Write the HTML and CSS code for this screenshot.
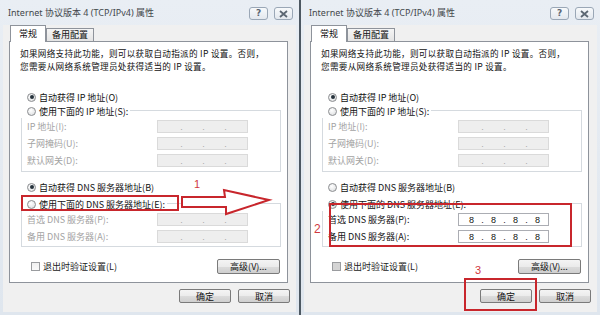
FILE: index.html
```html
<!DOCTYPE html>
<html lang="zh-CN">
<head>
<meta charset="utf-8">
<title>Internet 协议版本 4 (TCP/IPv4) 属性</title>
<link rel="stylesheet" href="styles.css">
</head>
<body>
<div class="screen">
  <section class="dlg">
    <header class="titlebar">
      <span class="title">Internet 协议版本 4 (TCP/IPv4) 属性</span>
      <div class="tbtns">
        <span class="tbtn help">?</span>
        <span class="tbtn close"><svg width="11" height="8" viewBox="0 0 11 8"><path d="M2 1 L9 7 M9 1 L2 7" stroke="#5b6672" stroke-width="1.8" fill="none"/></svg></span>
      </div>
    </header>
    <div class="client">
      <div class="tabs"><span class="tab active">常规</span><span class="tab">备用配置</span></div>
      <div class="panel">
        <div class="desc"><span>如果网络支持此功能，则可以获取自动指派的 IP 设置。否则，</span><span>您需要从网络系统管理员处获得适当的 IP 设置。</span></div>
        <div class="opt first"><span class="radio on"></span>自动获得 IP 地址(O)</div>
        <div class="group">
          <div class="opt legend"><span class="radio"></span>使用下面的 IP 地址(S):</div>
          <div class="row dis"><span class="lbl">IP 地址(I):</span><span class="ipbox off"><i></i><b>.</b><i></i><b>.</b><i></i><b>.</b><i></i></span></div>
          <div class="row dis"><span class="lbl">子网掩码(U):</span><span class="ipbox off"><i></i><b>.</b><i></i><b>.</b><i></i><b>.</b><i></i></span></div>
          <div class="row dis"><span class="lbl">默认网关(D):</span><span class="ipbox off"><i></i><b>.</b><i></i><b>.</b><i></i><b>.</b><i></i></span></div>
        </div>
        <div class="opt mid"><span class="radio on"></span>自动获得 DNS 服务器地址(B)</div>
        <div class="group g2">
          <div class="opt legend"><span class="radio"></span>使用下面的 DNS 服务器地址(E):</div>
          <div class="row dis"><span class="lbl">首选 DNS 服务器(P):</span><span class="ipbox off"><i></i><b>.</b><i></i><b>.</b><i></i><b>.</b><i></i></span></div>
          <div class="row dis"><span class="lbl">备用 DNS 服务器(A):</span><span class="ipbox off"><i></i><b>.</b><i></i><b>.</b><i></i><b>.</b><i></i></span></div>
        </div>
        <div class="foot">
          <div class="chk"><span class="box"></span>退出时验证设置(L)</div>
          <span class="btn adv">高级(V)...</span>
        </div>
      </div>
      <div class="actions"><span class="btn">确定</span><span class="btn">取消</span></div>
    </div>
  </section>
  <div class="divider"></div>
  <section class="dlg">
    <header class="titlebar">
      <span class="title">Internet 协议版本 4 (TCP/IPv4) 属性</span>
      <div class="tbtns">
        <span class="tbtn help">?</span>
        <span class="tbtn close"><svg width="11" height="8" viewBox="0 0 11 8"><path d="M2 1 L9 7 M9 1 L2 7" stroke="#5b6672" stroke-width="1.8" fill="none"/></svg></span>
      </div>
    </header>
    <div class="client">
      <div class="tabs"><span class="tab active">常规</span><span class="tab">备用配置</span></div>
      <div class="panel">
        <div class="desc"><span>如果网络支持此功能，则可以获取自动指派的 IP 设置。否则，</span><span>您需要从网络系统管理员处获得适当的 IP 设置。</span></div>
        <div class="opt first"><span class="radio on"></span>自动获得 IP 地址(O)</div>
        <div class="group">
          <div class="opt legend"><span class="radio"></span>使用下面的 IP 地址(S):</div>
          <div class="row dis"><span class="lbl">IP 地址(I):</span><span class="ipbox off"><i></i><b>.</b><i></i><b>.</b><i></i><b>.</b><i></i></span></div>
          <div class="row dis"><span class="lbl">子网掩码(U):</span><span class="ipbox off"><i></i><b>.</b><i></i><b>.</b><i></i><b>.</b><i></i></span></div>
          <div class="row dis"><span class="lbl">默认网关(D):</span><span class="ipbox off"><i></i><b>.</b><i></i><b>.</b><i></i><b>.</b><i></i></span></div>
        </div>
        <div class="opt mid"><span class="radio"></span>自动获得 DNS 服务器地址(B)</div>
        <div class="group g2">
          <div class="opt legend"><span class="radio on"></span>使用下面的 DNS 服务器地址(E):</div>
          <div class="row"><span class="lbl">首选 DNS 服务器(P):</span><span class="ipbox"><i>8</i><b>.</b><i>8</i><b>.</b><i>8</i><b>.</b><i>8</i></span></div>
          <div class="row"><span class="lbl">备用 DNS 服务器(A):</span><span class="ipbox"><i>8</i><b>.</b><i>8</i><b>.</b><i>8</i><b>.</b><i>8</i></span></div>
        </div>
        <div class="foot">
          <div class="chk"><span class="box grey"></span>退出时验证设置(L)</div>
          <span class="btn adv">高级(V)...</span>
        </div>
      </div>
      <div class="actions"><span class="btn">确定</span><span class="btn">取消</span></div>
    </div>
  </section>

  <div class="mark box1"></div>
  <span class="num n1">1</span>
  <svg class="arrow" width="96" height="32" viewBox="0 0 96 32"><polygon points="3,10 46,10 45,3 90,13 47,27 47,20 3,20" fill="#fff" stroke="#c8262c" stroke-width="2" stroke-linejoin="miter"/></svg>
  <div class="mark box2"></div>
  <span class="num n2">2</span>
  <div class="mark box3"></div>
  <span class="num n3">3</span>
</div>
</body>
</html>
```

FILE: styles.css
```css
* { box-sizing: border-box; margin: 0; padding: 0; }
html, body { width: 600px; height: 315px; overflow: hidden; }
body {
  font-family: "Noto Sans CJK SC", "Noto Sans", sans-serif;
  font-size: 9px;
  color: #111;
  background: #e3eaf2;
}
.screen { position: relative; display: flex; width: 600px; height: 315px; }
.divider { width: 2px; background: #4d5862; }

.dlg {
  width: 299px;
  height: 315px;
  display: flex;
  flex-direction: column;
  padding: 0 3px 3px;
  background: linear-gradient(#e9eef4, #dfe6ee);
}
.titlebar {
  height: 25px;
  display: flex;
  align-items: flex-start;
  justify-content: space-between;
  padding: 0 3px 0 5px;
}
.title {
  font-family: "Noto Sans", "Noto Sans CJK SC", sans-serif;
  font-size: 9px;
  line-height: 12px;
  margin-top: 7px;
  color: #44484c;
  white-space: nowrap;
}
.tbtns { display: flex; gap: 6px; margin-top: 7px; }
.tbtn {
  width: 19px;
  height: 13px;
  border: 1px solid #9aa7b6;
  border-radius: 3px;
  background: linear-gradient(#f7f9fb, #e3e8ee);
  display: flex;
  align-items: center;
  justify-content: center;
  font-family: "DejaVu Sans", sans-serif;
  font-size: 9px;
  font-weight: bold;
  color: #5b6672;
  line-height: 1;
}

.client {
  flex: 1;
  background: #f0f0f0;
  padding: 0 8px 0 6px;
  display: flex;
  flex-direction: column;
}
.tabs { height: 16px; display: flex; align-items: flex-end; padding-left: 1px; }
.tab {
  height: 13px;
  padding: 0 5px;
  border: 1px solid #8e939b;
  border-bottom: none;
  background: linear-gradient(#f5f5f5, #e4e4e4);
  line-height: 12px;
  font-size: 9px;
  color: #111;
}
.tab.active {
  position: relative;
  z-index: 1;
  height: 17px;
  width: 36px;
  margin-bottom: -1px;
  background: #fff;
  line-height: 15px;
  padding: 0 0 0 8px;
}
.panel {
  height: 242px;
  border: 1px solid #8e939b;
  background: #fff;
  display: flex;
  flex-direction: column;
}
.desc { margin: 5px 0 0 10px; height: 25px; display: flex; flex-direction: column; }
.desc span {
  display: block;
  height: 12.5px;
  line-height: 12.5px;
  font-size: 8.6px;
  letter-spacing: 0.3px;
  white-space: nowrap;
}

.opt { height: 14px; display: flex; align-items: center; gap: 3px; white-space: nowrap; }
.opt.first { margin: 18px 0 0 17px; }
.opt.mid { margin: 8px 0 0 17px; }
.radio {
  width: 9px;
  height: 9px;
  border-radius: 50%;
  border: 1px solid #8b8d90;
  background: radial-gradient(circle at 40% 35%, #ffffff, #d8dadc);
  display: flex;
  align-items: center;
  justify-content: center;
  flex: none;
}
.radio.on::after {
  content: "";
  width: 4px;
  height: 4px;
  border-radius: 50%;
  background: #26323c;
}

.group {
  margin: 6px 6px 0 11px;
  border: 1px solid #d5dadf;
  padding: 0 0 2px 5px;
  display: flex;
  flex-direction: column;
}
.group.g2 { margin-top: 9px; padding-bottom: 1px; }
.opt.legend {
  align-self: flex-start;
  margin: -7px 0 0 -6px;
  padding: 0 2px 0 6px;
  background: #fff;
}
.row { height: 17px; display: flex; align-items: center; }
.row.dis { color: #a3a3a3; }
.lbl { flex: 1; white-space: nowrap; }
.ipbox {
  width: 91px;
  height: 13px;
  margin-right: 32px;
  border: 1px solid #abadb3;
  background: #fff;
  display: flex;
  align-items: center;
  padding-left: 3px;
  font-family: "Liberation Sans", sans-serif;
  font-size: 9px;
  color: #111;
}
.ipbox.off { background: #eeeeee; border-color: #dadada; color: #a8a8a8; }
.ipbox i { width: 19px; text-align: center; font-style: normal; }
.ipbox b { width: 3px; text-align: center; font-weight: normal; }

.foot {
  margin: 11px 7px 0 21px;
  height: 16px;
  display: flex;
  align-items: center;
  justify-content: space-between;
}
.chk { display: flex; align-items: center; gap: 3px; color: #222; }
.box {
  width: 9px;
  height: 9px;
  border: 1px solid #9a9c9f;
  background: linear-gradient(#f0f0f0, #fafafa);
}
.box.grey { background: #d4d4d4; }

.btn {
  height: 15px;
  border: 1px solid #7a7a7a;
  border-radius: 2px;
  background: linear-gradient(#f4f4f4 0%, #ebebeb 50%, #dcdcdc 51%, #cfcfcf 100%);
  display: flex;
  align-items: center;
  justify-content: center;
  color: #111;
  white-space: nowrap;
}
.btn.adv { width: 63px; }
.actions {
  margin: 6px -2px 0 0;
  display: flex;
  justify-content: flex-end;
  gap: 7px;
}
.actions .btn { width: 52px; height: 14px; }

.mark { position: absolute; border: 2px solid #c8262c; }
.box1 { left: 21px; top: 195px; width: 158px; height: 16px; }
.box2 { left: 329px; top: 203px; width: 243px; height: 44px; }
.box3 { left: 464px; top: 278px; width: 73px; height: 33px; }
.num {
  position: absolute;
  font-family: "Liberation Sans", sans-serif;
  color: #d0383e;
  line-height: 1;
}
.n1 { left: 194px; top: 179px; font-size: 11px; }
.n2 { left: 314px; top: 223px; font-size: 12px; }
.n3 { left: 475px; top: 265px; font-size: 11px; }
.arrow { position: absolute; left: 179px; top: 187px; }
```
